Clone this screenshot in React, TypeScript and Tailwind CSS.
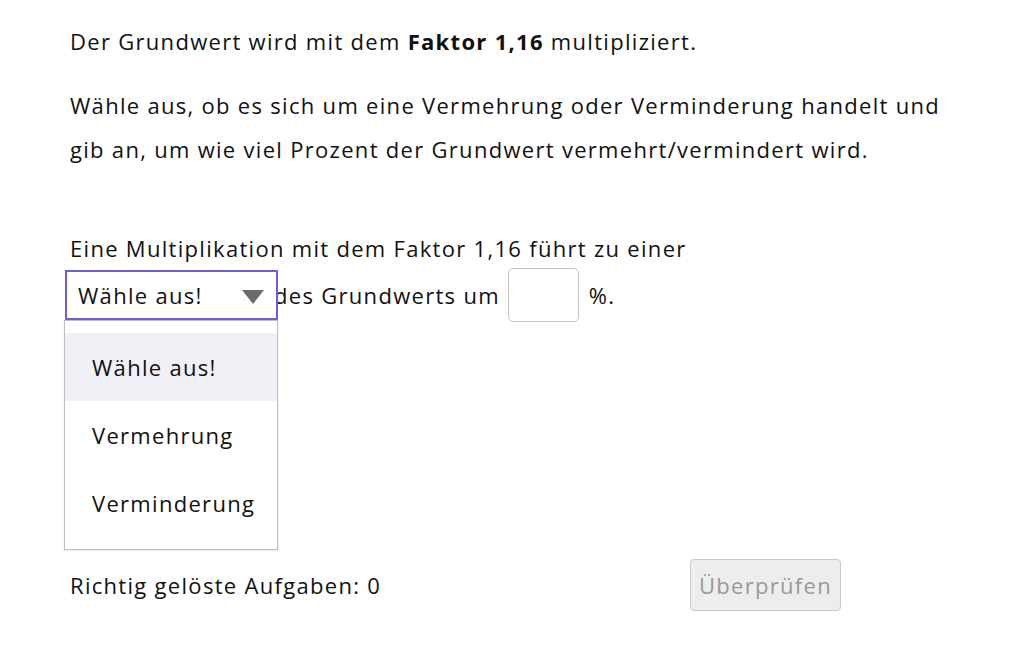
const options = ['Wähle aus!', 'Vermehrung', 'Verminderung']

function Select() {
  return (
    <div className="relative inline-block align-middle">
      <div className="flex h-[50px] w-[213px] items-center justify-between border-2 border-[#6b5fd6] bg-white pl-[11px] pr-[12px]">
        <span>Wähle aus!</span>
        <svg width="22" height="14" viewBox="0 0 22 14" className="mt-[4px]">
          <polygon points="0,0 22,0 11,14" fill="#6b6b6b" />
        </svg>
      </div>
      <ul className="absolute left-[-1px] top-[50px] z-10 w-[214px] border border-[#bdbdbd] bg-white py-[12px] shadow-[0_1px_2px_rgba(0,0,0,0.08)]">
        {options.map((o, i) => (
          <li
            key={o}
            className={`flex h-[68px] items-center pl-[27px] ${i === 0 ? 'bg-[#f1f0f6]' : ''}`}
          >
            {o}
          </li>
        ))}
      </ul>
    </div>
  )
}

export default function App() {
  return (
    <div className="min-h-screen bg-white font-['Open_Sans',sans-serif] text-[22px] tracking-[1.3px] text-[#111]">
      <div className="w-[950px] pl-[70px] pt-[24px]">
        <p className="leading-[34px]">
          Der Grundwert wird mit dem <b>Faktor 1,16</b> multipliziert.
        </p>
        <p className="mt-[25px] leading-[44px]">
          Wähle aus, ob es sich um eine Vermehrung oder Verminderung handelt und gib an, um wie viel
          Prozent der Grundwert vermehrt/vermindert wird.
        </p>
        <div className="mt-[60px]">
          <p className="leading-[34px]">Eine Multiplikation mit dem Faktor 1,16 führt zu einer</p>
          <div className="-ml-[5px] mt-[3px] flex items-center">
            <Select />
            <span className="ml-[-4px] bg-white">des Grundwerts um</span>
            <input
              className="ml-[8px] h-[54px] w-[71px] rounded-[5px] border border-[#c4c4c4] bg-white"
              aria-label="Prozent"
            />
            <span className="ml-[10px]">%.</span>
          </div>
        </div>
        <div className="mt-[237px] flex items-center">
          <span className="w-[620px]">Richtig gelöste Aufgaben: 0</span>
          <button
            disabled
            className="h-[52px] w-[151px] rounded-[4px] border border-[#c9c9c9] bg-[#ededed] text-[#999]"
          >
            Überprüfen
          </button>
        </div>
      </div>
    </div>
  )
}
